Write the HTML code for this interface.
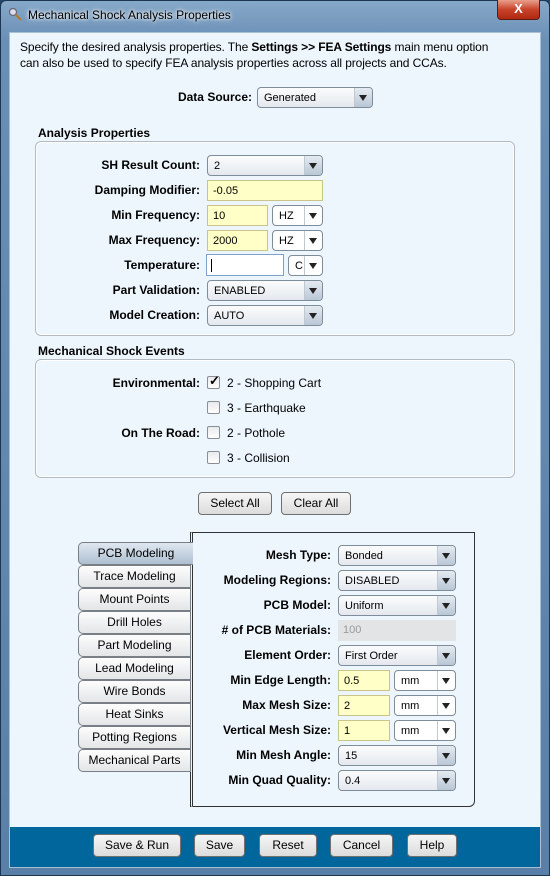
<!DOCTYPE html>
<html><head><meta charset="utf-8"><style>
*{box-sizing:border-box;margin:0;padding:0}
body{width:550px;height:876px;overflow:hidden;background:#24476e;font-family:"Liberation Sans",Arial,sans-serif;font-size:12px;color:#000;position:relative}
.a{position:absolute}
.frame{left:0;top:0;width:550px;height:876px;background:linear-gradient(#86a8c9,#6a8fb5 40px,#5a80a8);border:1px solid #1d3552;border-radius:6px 6px 0 0}
.client{left:9px;top:32px;width:532px;height:836px;background:#eef6fd;border:1px solid #a9bfd6}
.lbl{font-weight:bold;text-align:right;width:200px;line-height:21px;height:21px}
.cb{height:21px;border:1px solid #7f8c99;border-radius:4px;background:linear-gradient(#fbfcfd,#e4e8ee);padding-left:6px;line-height:21px;font-size:11px}
.cb::after{content:"";position:absolute;right:0;top:0;width:17px;height:19px;border-left:1px solid #c0c8d2;background:linear-gradient(#e4eaf1,#b9c7d6);border-radius:0 3px 3px 0}
.cb i{position:absolute;right:5px;top:7px;width:0;height:0;border-left:4px solid transparent;border-right:4px solid transparent;border-top:6px solid #222;z-index:2}
.cw::after{background:none}
.tf{height:21px;border:1px solid #c9c48a;background:#ffffc8;padding-left:5px;line-height:21px;font-size:11px}
.box{border:1px solid #b3bac2;border-radius:6px;background:#eef6fd;box-shadow:inset 0 0 0 1px #fff}
.hd{font-weight:bold;font-size:12px}
.btn{height:23px;border:1px solid #707070;border-radius:4px;background:linear-gradient(#f6f6f6,#dcdcdc);text-align:center;line-height:21px;font-size:12px}
.chk{width:13px;height:13px;border:1px solid #8a8f96;border-radius:2px;background:linear-gradient(#e8eaec,#fff)}
.tab{left:78px;width:113px;height:23px;border:1px solid #7a7f86;border-radius:5px 0 0 5px;background:linear-gradient(#fdfdfd,#e3e5e8);text-align:center;line-height:21px;font-size:12px}
</style></head><body>
<div class="a frame"></div>
<div class="a" style="left:8px;top:7px;width:14px;height:14px">
<svg width="14" height="14"><circle cx="5" cy="5" r="3.5" fill="#dde" stroke="#667" stroke-width="1.2"/><line x1="7.5" y1="7.5" x2="13" y2="13" stroke="#b07a30" stroke-width="2"/></svg></div>
<div class="a" style="left:28px;top:8px;font-size:12px;color:#000;text-shadow:0 0 6px #fff,0 0 3px #fff">Mechanical Shock Analysis Properties</div>
<div class="a" style="left:497px;top:0;width:43px;height:20px;background:linear-gradient(#e8a08c,#c8432a 50%,#b02810);border:1px solid #5a1d14;border-top:none;border-radius:0 0 4px 4px;color:#fff;font-weight:bold;text-align:center;line-height:18px;font-size:13px">X</div>
<div class="a client"></div>
<div class="a" style="left:20px;top:39px;width:500px;line-height:16px;font-size:12px;letter-spacing:-0.1px">Specify the desired analysis properties. The <b>Settings &gt;&gt; FEA Settings</b> main menu option<br>can also be used to specify FEA analysis properties across all projects and CCAs.</div>
<div class="a lbl" style="left:52px;top:87px">Data Source:</div>
<div class="a cb" style="left:257px;top:87px;width:116px">Generated<i></i></div>

<div class="a hd" style="left:38px;top:126px">Analysis Properties</div>
<div class="a box" style="left:35px;top:141px;width:480px;height:195px"></div>
<div class="a lbl" style="left:0;top:155px">SH Result Count:</div><div class="a cb" style="left:207px;top:155px;width:116px">2<i></i></div>
<div class="a lbl" style="left:0;top:180px">Damping Modifier:</div><div class="a tf" style="left:207px;top:180px;width:116px">-0.05</div>
<div class="a lbl" style="left:0;top:205px">Min Frequency:</div><div class="a tf" style="left:207px;top:205px;width:61px">10</div><div class="a cb cw" style="left:272px;top:205px;width:51px;background:#fff">HZ<i></i></div>
<div class="a lbl" style="left:0;top:230px">Max Frequency:</div><div class="a tf" style="left:207px;top:230px;width:61px">2000</div><div class="a cb cw" style="left:272px;top:230px;width:51px;background:#fff">HZ<i></i></div>
<div class="a lbl" style="left:0;top:255px">Temperature:</div><div class="a" style="left:206px;top:254px;width:78px;height:22px;border:1px solid #7da2ce;background:#fff"><div style="position:absolute;left:4px;top:4px;width:1px;height:13px;background:#000"></div></div><div class="a cb cw" style="left:288px;top:255px;width:35px;background:#fff">C<i></i></div>
<div class="a lbl" style="left:0;top:280px">Part Validation:</div><div class="a cb" style="left:207px;top:280px;width:116px">ENABLED<i></i></div>
<div class="a lbl" style="left:0;top:305px">Model Creation:</div><div class="a cb" style="left:207px;top:305px;width:116px">AUTO<i></i></div>

<div class="a hd" style="left:38px;top:344px">Mechanical Shock Events</div>
<div class="a box" style="left:35px;top:359px;width:480px;height:119px"></div>
<div class="a lbl" style="left:0;top:373px">Environmental:</div>
<div class="a chk" style="left:207px;top:376px"></div><div class="a" style="left:209px;top:373px;font-size:13px;font-weight:bold">✓</div><div class="a" style="left:227px;top:376px">2 - Shopping Cart</div>
<div class="a chk" style="left:207px;top:401px"></div><div class="a" style="left:227px;top:401px">3 - Earthquake</div>
<div class="a lbl" style="left:0;top:423px">On The Road:</div>
<div class="a chk" style="left:207px;top:426px"></div><div class="a" style="left:227px;top:426px">2 - Pothole</div>
<div class="a chk" style="left:207px;top:451px"></div><div class="a" style="left:227px;top:451px">3 - Collision</div>
<div class="a btn" style="left:198px;top:492px;width:74px">Select All</div>
<div class="a btn" style="left:281px;top:492px;width:70px">Clear All</div>

<div class="a" style="left:190px;top:532px;width:285px;height:275px;border:1px solid #333;border-left:3px double #333;border-radius:0 0 6px 0;background:#eef6fd"></div>
<div class="a tab" style="top:542px;background:linear-gradient(#dfe8f1,#aebfd1);width:115px;border-right:none">PCB Modeling</div>
<div class="a tab" style="top:565px">Trace Modeling</div>
<div class="a tab" style="top:588px">Mount Points</div>
<div class="a tab" style="top:611px">Drill Holes</div>
<div class="a tab" style="top:634px">Part Modeling</div>
<div class="a tab" style="top:657px">Lead Modeling</div>
<div class="a tab" style="top:680px">Wire Bonds</div>
<div class="a tab" style="top:703px">Heat Sinks</div>
<div class="a tab" style="top:726px">Potting Regions</div>
<div class="a tab" style="top:749px">Mechanical Parts</div>

<div class="a lbl" style="left:131px;top:545px">Mesh Type:</div><div class="a cb" style="left:338px;top:545px;width:118px">Bonded<i></i></div>
<div class="a lbl" style="left:131px;top:570px">Modeling Regions:</div><div class="a cb" style="left:338px;top:570px;width:118px">DISABLED<i></i></div>
<div class="a lbl" style="left:131px;top:595px">PCB Model:</div><div class="a cb" style="left:338px;top:595px;width:118px">Uniform<i></i></div>
<div class="a lbl" style="left:131px;top:620px"># of PCB Materials:</div><div class="a" style="left:338px;top:620px;width:118px;height:21px;background:#e2e4e6;color:#999;padding-left:5px;line-height:21px;font-size:11px">100</div>
<div class="a lbl" style="left:131px;top:645px">Element Order:</div><div class="a cb" style="left:338px;top:645px;width:118px">First Order<i></i></div>
<div class="a lbl" style="left:131px;top:670px">Min Edge Length:</div><div class="a tf" style="left:338px;top:670px;width:52px">0.5</div><div class="a cb cw" style="left:394px;top:670px;width:62px;background:#fff">mm<i></i></div>
<div class="a lbl" style="left:131px;top:695px">Max Mesh Size:</div><div class="a tf" style="left:338px;top:695px;width:52px">2</div><div class="a cb cw" style="left:394px;top:695px;width:62px;background:#fff">mm<i></i></div>
<div class="a lbl" style="left:131px;top:720px">Vertical Mesh Size:</div><div class="a tf" style="left:338px;top:720px;width:52px">1</div><div class="a cb cw" style="left:394px;top:720px;width:62px;background:#fff">mm<i></i></div>
<div class="a lbl" style="left:131px;top:745px">Min Mesh Angle:</div><div class="a cb" style="left:338px;top:745px;width:118px">15<i></i></div>
<div class="a lbl" style="left:131px;top:770px">Min Quad Quality:</div><div class="a cb" style="left:338px;top:770px;width:118px">0.4<i></i></div>

<div class="a" style="left:10px;top:827px;width:530px;height:40px;background:#00669c"></div>
<div class="a btn" style="left:93px;top:834px;width:88px">Save &amp; Run</div>
<div class="a btn" style="left:194px;top:834px;width:51px">Save</div>
<div class="a btn" style="left:259px;top:834px;width:58px">Reset</div>
<div class="a btn" style="left:330px;top:834px;width:63px">Cancel</div>
<div class="a btn" style="left:407px;top:834px;width:50px">Help</div>
</body></html>
